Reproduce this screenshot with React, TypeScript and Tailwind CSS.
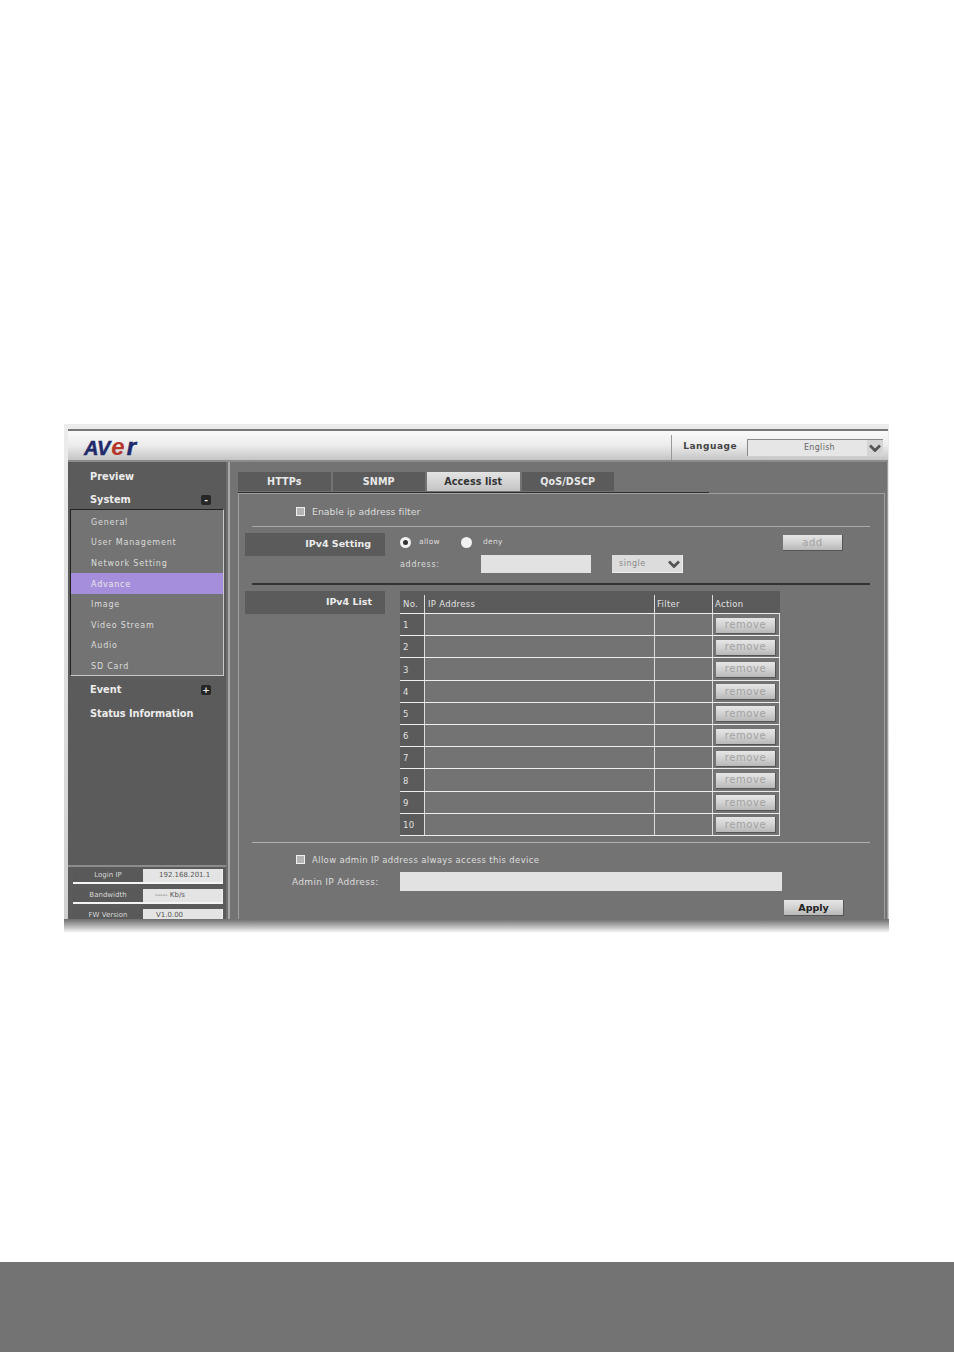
const subMenu = ["General", "User Management", "Network Setting", "Advance", "Image", "Video Stream", "Audio", "SD Card"];
const tabs = ["HTTPs", "SNMP", "Access list", "QoS/DSCP"];
const rows = [1, 2, 3, 4, 5, 6, 7, 8, 9, 10];
const statusRows = [
    { label: "Login IP", value: "192.168.201.1", pad: "pl-[16px]" },
    { label: "Bandwidth", value: "----- Kb/s", pad: "pl-[12px]" },
    { label: "FW Version", value: "V1.0.00", pad: "pl-[13px]" },
];

const Chevron = ({ className }: { className: string }) => <svg viewBox="0 0 12 8" className={className}>
    <path d="M1 1.5 L6 6.5 L11 1.5" fill="none" stroke="#555" strokeWidth="2.8" />
</svg>;

const ToggleBox = ({ sign }: { sign: string }) => <span className="flex h-[10px] w-[10px] items-center justify-center rounded-[2px] bg-[#262626] text-[9px] font-bold leading-none text-[#e8e8e8]">{sign}</span>;

const GreyButton = ({ label, dark }: { label: string; dark?: boolean }) => <button className={"h-[16px] w-[60px] border-r border-b border-[#555] bg-gradient-to-b from-[#e6e6e6] via-[#d2d2d2] to-[#b8b8b8] leading-none " + (dark ? "text-[9.5px] font-bold text-[#222]" : "text-[10px] tracking-[0.6px] text-[#a2a2a2]")}>{label}</button>;

const CheckBox = () => <span className="h-[9px] w-[9px] shrink-0 border border-[#efefef] bg-[#b4b4b4]" />;

const Sidebar = () => <div className="flex w-[158px] shrink-0 flex-col bg-[#5b5b5b]">
    <div className="flex h-[23px] items-center pl-[22px] pt-[8px] text-[9.8px] font-bold text-[#ececec]">Preview</div>
    <div className="flex h-[24px] items-center justify-between pl-[22px] pr-[15px] pt-[6px] text-[9.8px] font-bold text-[#ececec]">System<ToggleBox sign="-" /></div>
    <div className="mx-[2px] flex h-[167px] flex-col border-b border-l border-r border-t border-b-[#c8c8c8] border-l-[#222] border-r-[#c8c8c8] border-t-[#222] bg-[#737373] pt-[1.5px]">
        {subMenu.map(item => <div key={item} className={"flex h-[20.6px] shrink-0 items-center pl-[20px] pt-[2px] text-[8px] tracking-[0.8px] " + (item === "Advance" ? "bg-[#a58fdc] text-[#e8e8e8]" : "text-[#dcdcdc]")}>{item}</div>)}
    </div>
    <div className="flex h-[24px] items-center justify-between pl-[22px] pr-[15px] pt-[4px] text-[9.8px] font-bold text-[#ececec]">Event<ToggleBox sign="+" /></div>
    <div className="mt-[3px] flex h-[23px] items-center pl-[22px] text-[9.8px] font-bold tracking-[-0.05px] text-[#ececec]">Status Information</div>
    <div className="mt-auto flex h-[54px] flex-col gap-[5px] border-t-2 border-[#8c8c8c] pl-[5px] pr-[3px] pt-[2px]">
        {statusRows.map(row => <div key={row.label} className="flex h-[15px] shrink-0 border-b-2 border-r border-b-[#f4f4f4] border-r-[#f0f0f0] bg-[#e4e4e4] text-[7px]">
            <div className="flex w-[70px] items-center justify-center bg-[#595959] text-[#d8d8d8]">{row.label}</div>
            <div className={"flex flex-1 items-center text-[#555] " + row.pad}>{row.value}</div>
        </div>)}
    </div>
</div>;

const ListTable = () => <div className="flex w-[380px] flex-col text-[8.5px] tracking-[0.3px] text-[#e0e0e0]">
    <div className="flex h-[23px] border-b border-[#eee] bg-[#5b5b5b] pt-[4px]">
        <div className="flex w-[24px] items-center pl-[3px]">No.</div>
        <div className="flex w-[230px] items-center border-l border-[#ddd] pl-[3px]">IP Address</div>
        <div className="flex w-[58px] items-center border-l border-[#ddd] pl-[2px]">Filter</div>
        <div className="flex flex-1 items-center border-l border-[#ddd] pl-[2px]">Action</div>
    </div>
    {rows.map(n => <div key={n} className="flex h-[22.2px] border-b border-[#eee]">
        <div className="flex w-[24px] items-center bg-[#5b5b5b] pl-[3px] pt-[2px]">{n}</div>
        <div className="w-[230px] border-l border-[#ddd]" />
        <div className="w-[58px] border-l border-[#ddd]" />
        <div className="flex flex-1 items-center border-l border-r border-[#ddd] pl-[3px] pt-[2px]"><GreyButton label="remove" /></div>
    </div>)}
</div>;

const MainPanel = () => <div className="ml-[2px] flex min-w-0 flex-1 flex-col border-l-2 border-r border-l-[#a8a8a8] border-r-[#9c9c9c] bg-[#737373] pl-[8px] pr-[2px] pt-[10px]">
    <div className="flex h-[20px] pb-[1px]">
        {tabs.map(tab => <div key={tab} className={"mr-[2px] flex h-[19px] w-[92.5px] items-center justify-center pt-[2px] text-[9.6px] font-bold tracking-[0.1px] " + (tab === "Access list" ? "bg-gradient-to-b from-[#e4e4e4] to-[#c4c4c4] text-[#333]" : "bg-[#5b5b5b] text-[#e8e8e8]")}>{tab}</div>)}
    </div>
    <div className="h-[1px] w-[471px] bg-[#2e2e2e]" />
    <div className="flex flex-1 flex-col border-l border-r border-t border-[#a0a0a0] pl-[6px] pr-[14px]">
        <div className="ml-[7px] flex h-[33px] items-center gap-[7px] border-b border-[#aaa] pl-[44px] pt-[3px] text-[9.3px] tracking-[0.05px] text-[#dedede]"><CheckBox />Enable ip address filter</div>
        <div className="mt-[6px] flex h-[50px]">
            <div className="flex h-[23px] w-[140px] items-center justify-end bg-[#5b5b5b] pb-[1px] pr-[14px] text-[9.5px] font-bold text-[#ececec]">IPv4 Setting</div>
            <div className="ml-[15px] flex flex-1 flex-col">
                <div className="flex h-[18px] items-center text-[7.5px] tracking-[0.3px] text-[#dcdcdc]">
                    <span className="h-[11px] w-[11px] rounded-full border-[3px] border-[#f2f2f2] bg-[#333]" />
                    <span className="ml-[8px] w-[42px]">allow</span>
                    <span className="h-[11px] w-[11px] rounded-full bg-[#f2f2f2]" />
                    <span className="ml-[11px]">deny</span>
                    <div className="ml-auto mr-[27px] pt-[2px]"><GreyButton label="add" /></div>
                </div>
                <div className="mt-[4px] flex h-[18px] items-center text-[8px] text-[#dcdcdc]">
                    <span className="w-[81px] pt-[2px] tracking-[0.7px]">address:</span>
                    <div className="h-[18px] w-[110px] bg-[#e2e2e2]" />
                    <div className="ml-[21px] flex h-[18px] w-[71px] items-center justify-between border-r border-b border-[#eee] bg-[#dcdcdc] pl-[7px] pr-[2px] pt-[1px] tracking-[0.5px] text-[#8a8a8a]">single<Chevron className="h-[8px] w-[12px]" /></div>
                </div>
            </div>
        </div>
        <div className="ml-[7px] h-[2px] bg-[#333]" />
        <div className="mt-[6px] flex">
            <div className="flex h-[23px] w-[140px] items-center justify-end bg-[#5b5b5b] pb-[1px] pr-[13px] text-[9.5px] font-bold text-[#ececec]">IPv4 List</div>
            <div className="ml-[15px]"><ListTable /></div>
        </div>
        <div className="ml-[7px] mt-[6px] h-[1px] bg-[#b0b0b0]" />
        <div className="ml-[51px] mt-[12px] flex h-[10px] items-center gap-[7px] text-[8.5px] tracking-[0.35px] text-[#dedede]"><CheckBox /><span className="pt-[1px]">Allow admin IP address always access this device</span></div>
        <div className="mt-[7px] flex h-[19px] items-center text-[9px] tracking-[0.3px] text-[#dedede]">
            <span className="ml-[47px] w-[108px] pt-[2px]">Admin IP Address:</span>
            <div className="h-[19px] w-[382px] bg-[#e2e2e2]" />
        </div>
        <div className="mt-[9px] flex justify-end pr-[26px]"><GreyButton label="Apply" dark /></div>
    </div>
</div>;

export default function App() {
    return <div className="flex h-[1352px] w-[954px] flex-col overflow-hidden bg-white font-['DejaVu_Sans',sans-serif]">
        <div className="ml-[64px] mt-[424px] w-[825px] bg-gradient-to-b from-[#ececec] to-[#d0d0d0] pl-[4px] pr-[1px] pt-[5px]">
            <div className="flex h-[490px] flex-col border-t-2 border-[#777]">
                <div className="flex h-[31px] shrink-0 items-center justify-between border-b-2 border-[#8c8c8c] bg-gradient-to-b from-[#fafafa] via-[#ececec] to-[#c4c4c4] pt-[3px]">
                    <div className="ml-[16px] flex items-baseline font-['Liberation_Sans',sans-serif] text-[20px] font-bold italic leading-none text-[#1f2a6b] [-webkit-text-stroke:0.5px_#1f2a6b]">AV<span className="ml-[1px] text-[24px] font-bold text-[#b5352b] [-webkit-text-stroke:0px]">e</span><span className="ml-[2px] text-[24px]">r</span></div>
                    <div className="mr-[5px] flex h-[25px] items-center border-l border-[#999] pl-[11px]">
                        <span className="text-[9px] font-bold tracking-[0.5px] text-[#444]">Language</span>
                        <div className="ml-[10px] flex h-[17px] w-[136px] items-center justify-between border-l border-t border-[#888] bg-[#e6e6e6] pl-[56px] text-[8px] tracking-[0.3px] text-[#666]">English<div className="flex h-full w-[16px] items-center justify-center bg-[#d4d4d4]"><Chevron className="h-[8px] w-[12px]" /></div></div>
                    </div>
                </div>
                <div className="flex min-h-0 flex-1 bg-[#6e6e6e]">
                    <Sidebar />
                    <MainPanel />
                </div>
            </div>
        </div>
        <div className="ml-[64px] h-[14px] w-[825px] bg-gradient-to-b from-[#6e6e6e] to-white" />
        <div className="mt-auto h-[90px] bg-[#737373]" />
    </div>;
}
